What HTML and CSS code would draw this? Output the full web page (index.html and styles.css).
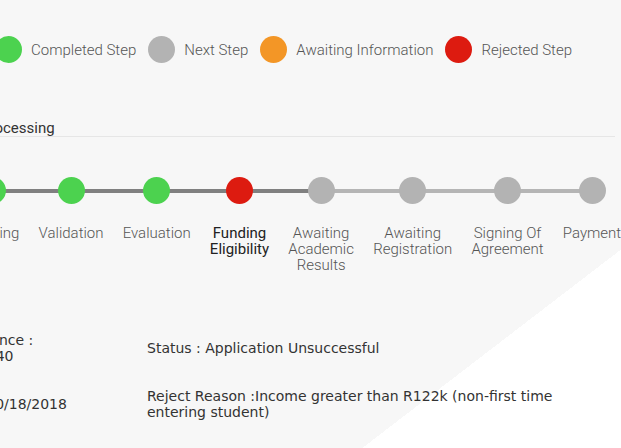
FILE: index.html
```html
<!DOCTYPE html>
<html lang="en" dir="ltr">
<head>
<meta charset="utf-8">
<meta name="viewport" content="width=device-width, initial-scale=1.0">
<title>Application Tracking</title>
<link rel="stylesheet" href="styles.css">
</head>
<body>
<div class="panel">
  <div class="legend">
    <span class="dot done"></span><span class="legend-text">Completed Step</span>
    <span class="dot next"></span><span class="legend-text">Next Step</span>
    <span class="dot wait"></span><span class="legend-text">Awaiting Information</span>
    <span class="dot reject"></span><span class="legend-text">Rejected Step</span>
  </div>

  <h4 class="heading">Application Processing</h4>

  <div class="steps">
    <div class="step past"><span class="dot done"></span><span class="label">Filtering</span></div>
    <div class="step past"><span class="dot done"></span><span class="label">Validation</span></div>
    <div class="step past"><span class="dot done"></span><span class="label">Evaluation</span></div>
    <div class="step past current"><span class="dot reject"></span><span class="label">Funding Eligibility</span></div>
    <div class="step edge"><span class="dot next"></span><span class="label">Awaiting Academic Results</span></div>
    <div class="step"><span class="dot next"></span><span class="label">Awaiting Registration</span></div>
    <div class="step"><span class="dot next"></span><span class="label">Signing Of Agreement</span></div>
    <div class="step last"><span class="dot next"></span><span class="label">Payment</span></div>
  </div>

  <div class="details">
    <div class="cell">Application Reference :<br>1810180935276140</div>
    <div class="cell">Status : Application Unsuccessful</div>
    <div class="cell">Date Received : 10/18/2018</div>
    <div class="cell">Reject Reason :Income greater than R122k (non-first time entering student)</div>
  </div>
</div>
</body>
</html>
```

FILE: styles.css
```css
html {
height: 100%;
background: linear-gradient(142.5deg, #f7f7f7 576px, #fff 576px);
}
body {
margin: 0;
height: 100%;
overflow: hidden;
font-family: Roboto, "Liberation Sans", sans-serif;
color: #555;
}
.panel {
margin-left: -135px;
width: 750px;
padding-top: 36px;
}
.dot {
display: block;
width: 27px;
height: 27px;
border-radius: 50%;
background: #b3b3b3;
flex: none;
}
.dot.done { background: #4cd24f; }
.dot.next { background: #b3b3b3; }
.dot.wait { background: #f39626; }
.dot.reject { background: #dd1b10; }

.legend {
display: flex;
align-items: center;
padding-left: 130px;
font-size: 15px;
font-weight: 300;
}
.legend-text {
margin: 0 12px 0 9px;
}

.heading {
margin: 57px 0 0 36px;
font-size: 15px;
line-height: 16px;
font-weight: 400;
color: #333;
border-bottom: 1px solid #e6e6e6;
}

.steps {
display: flex;
margin-top: 40px;
padding-left: 92px;
}
.step {
position: relative;
display: flex;
flex-direction: column;
align-items: center;
padding: 0 9.6px;
}
.step::before, .step::after {
content: "";
position: absolute;
top: 12px;
height: 4px;
width: 50%;
background: #b5b5b5;
}
.step::before { left: 0; }
.step::after { right: 0; }
.step.past::before, .step.past::after, .step.edge::before { background: #808080; }
.step.last::after { display: none; }
.step .dot {
position: relative;
z-index: 1;
margin-bottom: 21px;
}
.label {
width: min-content;
text-align: center;
font-size: 15px;
line-height: 16px;
font-weight: 300;
}
.current .label {
font-weight: 400;
color: #222;
}

.details {
display: grid;
grid-template-columns: 276px 420px;
margin-top: 47px;
padding-left: 6px;
font-family: "Comic Sans MS", "DejaVu Sans", sans-serif;
font-size: 14px;
line-height: 16px;
color: #333;
}
.cell {
display: flex;
align-items: center;
padding: 12px 0;
}
```
